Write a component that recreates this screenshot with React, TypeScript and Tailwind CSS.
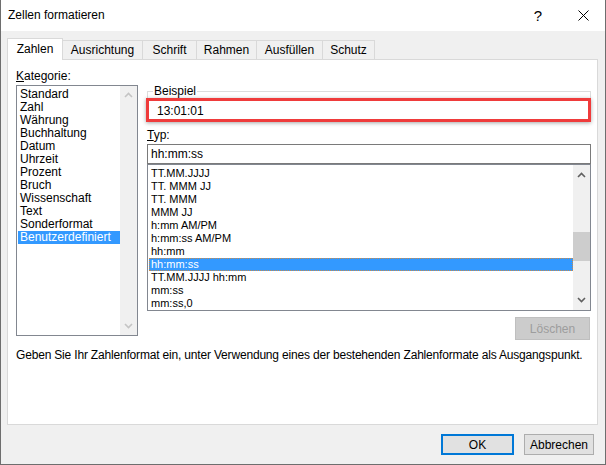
import React from "react";

const KATEGORIEN = [
  "Standard",
  "Zahl",
  "Währung",
  "Buchhaltung",
  "Datum",
  "Uhrzeit",
  "Prozent",
  "Bruch",
  "Wissenschaft",
  "Text",
  "Sonderformat",
  "Benutzerdefiniert",
];

const TYPEN = [
  "TT.MM.JJJJ",
  "TT. MMM JJ",
  "TT. MMM",
  "MMM JJ",
  "h:mm AM/PM",
  "h:mm:ss AM/PM",
  "hh:mm",
  "hh:mm:ss",
  "TT.MM.JJJJ hh:mm",
  "mm:ss",
  "mm:ss,0",
];

const TABS = [
  { label: "Ausrichtung", w: "w-[80px]" },
  { label: "Schrift", w: "w-[54px]" },
  { label: "Rahmen", w: "w-[60px]" },
  { label: "Ausfüllen", w: "w-[66px]" },
  { label: "Schutz", w: "w-[52px]" },
];

function Chevron({ up, color }: { up?: boolean; color: string }) {
  return (
    <svg width="9" height="6" viewBox="0 0 9 6">
      <path
        d={up ? "M1 5 L4.5 1.5 L8 5" : "M1 1 L4.5 4.5 L8 1"}
        fill="none"
        stroke={color}
        strokeWidth="1.6"
      />
    </svg>
  );
}

export default function App() {
  return (
    <div className="w-[606px] h-[465px] flex flex-col bg-[#f0f0f0] border-x border-b border-[#6e6e6e] font-['Liberation_Sans',Arial,sans-serif] text-[12px] text-black overflow-hidden">
      {/* Title bar */}
      <div className="h-[31px] shrink-0 bg-white flex items-center">
        <span className="pl-[7px] leading-[15px]">Zellen formatieren</span>
        <div className="ml-auto flex h-full">
          <div className="w-[46px] flex items-center justify-center text-[15px] leading-none">?</div>
          <div className="w-[44px] flex items-center justify-center">
            <svg width="11" height="11" viewBox="0 0 11 11">
              <path d="M0.5 0.5 L10.5 10.5 M10.5 0.5 L0.5 10.5" stroke="#000" strokeWidth="1" />
            </svg>
          </div>
        </div>
      </div>

      <div className="flex-1 flex flex-col pl-[6px] pr-[7px] pt-[7px]">
        {/* Tabs */}
        <div className="flex items-end h-[21px]">
          <div className="relative z-10 -mb-px h-[22px] w-[56px] bg-white border border-b-0 border-[#d9d9d9] flex items-center justify-center pb-[2px]">
            Zahlen
          </div>
          {TABS.map((t) => (
            <div
              key={t.label}
              className={`h-[19px] ${t.w} border border-l-0 border-b-0 border-[#d9d9d9] flex items-center justify-center`}
            >
              {t.label}
            </div>
          ))}
        </div>

        {/* Panel */}
        <div className="h-[366px] bg-white border border-[#d9d9d9] flex flex-col pl-[8px] pt-[8px]">
          <div className="flex items-start">
            {/* Kategorie */}
            <div className="w-[122px] flex flex-col">
              <div className="h-[16px] leading-[16px]">
                <span className="underline">K</span>ategorie:
              </div>
              <div className="mt-[1px] h-[251px] border border-[#828790] flex">
                <div className="flex-1 pt-[2px] pl-[1px]">
                  {KATEGORIEN.map((k) => (
                    <div
                      key={k}
                      className={`h-[13px] leading-[13px] pl-[2px] whitespace-nowrap ${
                        k === "Benutzerdefiniert" ? "bg-[#3399ff] text-white" : ""
                      }`}
                    >
                      {k}
                    </div>
                  ))}
                </div>
                <div className="w-[17px] bg-[#f0f0f0] flex flex-col justify-between items-center py-[6px]">
                  <Chevron up color="#c4c4c4" />
                  <Chevron color="#c4c4c4" />
                </div>
              </div>
            </div>

            {/* Right column */}
            <div className="relative ml-[9px] w-[444px] flex flex-col pt-[16px]">
              <fieldset className="border border-[#dcdcdc] pl-[5px] pt-[5px] pb-[2px]">
                <legend className="px-[1px] leading-[15px]">Beispiel</legend>
                <div className="pl-[4px] leading-[15px]">13:01:01</div>
              </fieldset>

              <div className="mt-[5px] h-[16px] leading-[16px]">
                <span className="underline">T</span>yp:
              </div>
              <div className="mt-[1px] h-[20px] border border-[#7a7a7a] pl-[3px] flex items-center">
                hh:mm:ss
              </div>
              <div className="h-[147px] border border-[#828790] flex overflow-hidden">
                <div className="flex-1 pt-[2px] pl-[1px] text-[11px]">
                  {TYPEN.map((t) => (
                    <div
                      key={t}
                      className={`h-[13px] leading-[13px] pl-[2px] whitespace-nowrap ${
                        t === "hh:mm:ss"
                          ? "bg-[#3399ff] text-white outline outline-1 outline-dotted outline-[#c98a4a] -outline-offset-1"
                          : ""
                      }`}
                    >
                      {t}
                    </div>
                  ))}
                </div>
                <div className="w-[17px] bg-[#f0f0f0] flex flex-col">
                  <div className="h-[20px] flex items-center justify-center">
                    <Chevron up color="#606060" />
                  </div>
                  <div className="h-[47px]" />
                  <div className="h-[29px] bg-[#cdcdcd]" />
                  <div className="flex-1" />
                  <div className="h-[20px] flex items-center justify-center">
                    <Chevron color="#606060" />
                  </div>
                </div>
              </div>
              <div className="self-end mr-[1px] mt-[6px] w-[75px] h-[23px] bg-[#cccccc] border border-[#bfbfbf] flex items-center justify-center text-[#9d9d9d]">
                Löschen
              </div>

              {/* annotation */}
              <div className="absolute left-[-1px] top-[30px] w-[445px] h-[24px] border-[3px] border-[#ef3b3b] shadow-[0_1px_4px_rgba(0,0,0,0.35)]" />
            </div>
          </div>

          <div className="mt-[8px] leading-[15px] whitespace-nowrap tracking-[-0.18px]">
            Geben Sie Ihr Zahlenformat ein, unter Verwendung eines der bestehenden Zahlenformate als Ausgangspunkt.
          </div>
        </div>

        {/* Buttons */}
        <div className="mt-[9px] pr-[4px] flex justify-end gap-[10px]">
          <div className="w-[73px] h-[21px] bg-[#e1e1e1] border-2 border-[#0078d7] flex items-center justify-center">
            OK
          </div>
          <div className="w-[70px] h-[21px] bg-[#e1e1e1] border border-[#adadad] flex items-center justify-center">
            Abbrechen
          </div>
        </div>
      </div>
    </div>
  );
}
